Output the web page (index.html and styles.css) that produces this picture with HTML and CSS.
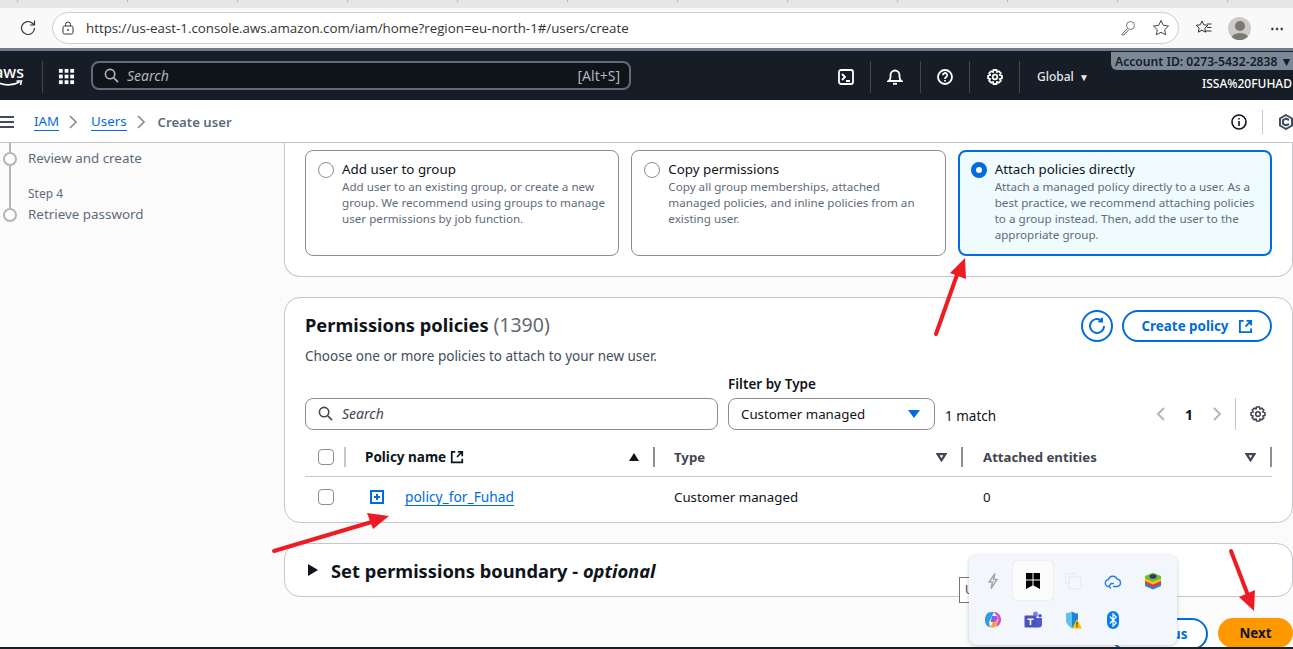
FILE: index.html
```html
<!doctype html>
<html lang="en">
<head>
    <meta charset="UTF-8">
    <meta name="viewport" content="width=device-width, initial-scale=1.0">
    <title>Create user | IAM</title>
    <link rel="stylesheet" href="styles.css">
</head>
<body>
    <div class="tabstrip"></div>

    <div class="browser-bar">
        <svg class="refresh-icon" viewBox="0 0 18 18"><path d="M15.5 9a6.5 6.5 0 1 1-2-4.7L15.5 6M15.5 1.5V6H11"/></svg>
        <div class="address">
            <svg class="lock-icon" viewBox="0 0 14 14"><rect x="2" y="5" width="10" height="8" rx="1.5"/><path d="M4.5 5V3.5a2.5 2.5 0 0 1 5 0V5"/><circle cx="7" cy="9" r=".6"/></svg>
            <span class="url">https://us-east-1.console.aws.amazon.com/iam/home?region=eu-north-1#/users/create</span>
            <svg class="key-icon" viewBox="0 0 16 16"><circle cx="10.5" cy="5.5" r="4"/><path d="M7.5 8.5 2 14v1h2l1-1v-1h1l2.5-3"/></svg>
            <svg class="star-icon" viewBox="0 0 18 18"><path d="m9 1.5 2.3 4.8 5.2.7-3.8 3.6.9 5.2L9 13.3l-4.6 2.5.9-5.2L1.5 7l5.2-.7z"/></svg>
        </div>
        <svg class="fav-icon" viewBox="0 0 18 18"><path d="m7 2 1.8 3.800 4 .5-3 2.800.8 4.100L7 11.200l-3.600 2 .7-4.100-3-2.800 4.100-.5z"/><path d="M12 5h4.500M12 8.500h4.500M11 12h5.500"/></svg>
        <div class="avatar"><span class="avatar-head"></span><span class="avatar-body"></span></div>
        <span class="more">&#8943;</span>
    </div>

    <nav class="topnav">
        <div class="logo">
            <span class="logo-text">aws</span>
            <svg class="logo-smile" viewBox="0 0 30 8"><path d="M1 1c7 5 17 5 24 1M22 1h5l-1 4"/></svg>
        </div>
        <svg class="apps-icon" viewBox="0 0 18 18"><rect x="1" y="1" width="4" height="4"/><rect x="7" y="1" width="4" height="4"/><rect x="13" y="1" width="4" height="4"/><rect x="1" y="7" width="4" height="4"/><rect x="7" y="7" width="4" height="4"/><rect x="13" y="7" width="4" height="4"/><rect x="1" y="13" width="4" height="4"/><rect x="7" y="13" width="4" height="4"/><rect x="13" y="13" width="4" height="4"/></svg>
        <div class="nav-search">
            <svg class="search-icon" viewBox="0 0 16 16"><circle cx="6.5" cy="6.5" r="5"/><path d="m10.5 10.5 4.500 4.500"/></svg>
            <span class="nav-search-text">Search</span>
            <span class="nav-shortcut">[Alt+S]</span>
        </div>
        <div class="nav-tools">
            <div class="nav-cell"><svg class="nav-icon" viewBox="0 0 16 16"><rect x="1" y="1" width="14" height="14" rx="2"/><path d="m4 5 3 3-3 3M8 12h4"/></svg></div>
            <div class="nav-cell"><svg class="nav-icon" viewBox="0 0 16 16"><path d="M1.5 12c1.500-1 2-2 2-4V6a4.500 4.500 0 0 1 9 0v2c0 2 .5 3 2 4z"/><path d="M6 14.800h4"/></svg></div>
            <div class="nav-cell"><svg class="nav-icon" viewBox="0 0 16 16"><circle cx="8" cy="8" r="7"/><path d="M5.800 6.200a2.200 2.200 0 1 1 3.300 1.900C8.300 8.600 8 9 8 10M8 11v1.500"/></svg></div>
            <div class="nav-cell"><svg class="nav-icon" viewBox="0 0 16 16"><path d="m6.500 1h3l.5 2 1.800-.8 2 2-.9 1.800 2 .6v2.800l-2 .6.900 1.800-2 2-1.800-.8-.5 2h-3l-.5-2-1.800.8-2-2 .9-1.800-2-.6V6.600l2-.6-.9-1.800 2-2L6 3z"/><circle cx="8" cy="8" r="2.300"/></svg></div>
            <div class="nav-global">Global <span class="caret">&#9660;</span></div>
            <div class="nav-account">
                <div class="account-tab">Account ID: 0273-5432-2838 &#9660;</div>
                <div class="account-name">ISSA%20FUHAD</div>
            </div>
        </div>
    </nav>

    <div class="crumbs">
        <svg class="menu-icon" viewBox="0 0 16 12"><path d="M0 1h14M0 6h14M0 11h14"/></svg>
        <a class="crumb-link">IAM</a>
        <svg class="crumb-sep" viewBox="0 0 8 14"><path d="m1 1 6 6-6 6"/></svg>
        <a class="crumb-link">Users</a>
        <svg class="crumb-sep crumb-sep-last" viewBox="0 0 8 14"><path d="m1 1 6 6-6 6"/></svg>
        <span class="crumb-current">Create user</span>
        <div class="crumb-tools">
            <svg class="info-icon" viewBox="0 0 16 16"><circle cx="8" cy="8" r="7"/><path d="M8 7v5M8 4v1.500"/></svg>
            <span class="crumb-divider"></span>
            <svg class="hex-icon" viewBox="0 0 16 16"><path d="M8 1 14 4.500v7L8 15 2 11.500v-7z"/><path d="M11 6 8 4.500 5 6v4l3 1.500L11 10"/></svg>
        </div>
    </div>

    <div class="main">
        <aside class="steps">
            <div class="rail rail-short"></div>
            <div class="step"><span class="step-dot"></span><span class="step-label">Review and create</span></div>
            <div class="rail rail-long"><span class="step-cap">Step 4</span></div>
            <div class="step"><span class="step-dot"></span><span class="step-label">Retrieve password</span></div>
        </aside>

        <div class="content">
            <section class="panel panel-options">
                <div class="options">
                    <div class="option">
                        <span class="radio"></span>
                        <div>
                            <div class="option-title">Add user to group</div>
                            <div class="option-desc">Add user to an existing group, or create a new group. We recommend using groups to manage user permissions by job function.</div>
                        </div>
                    </div>
                    <div class="option">
                        <span class="radio"></span>
                        <div>
                            <div class="option-title">Copy permissions</div>
                            <div class="option-desc">Copy all group memberships, attached managed policies, and inline policies from an existing user.</div>
                        </div>
                    </div>
                    <div class="option option-selected">
                        <span class="radio radio-on"></span>
                        <div>
                            <div class="option-title">Attach policies directly</div>
                            <div class="option-desc">Attach a managed policy directly to a user. As a best practice, we recommend attaching policies to a group instead. Then, add the user to the appropriate group.</div>
                        </div>
                    </div>
                </div>
            </section>

            <section class="panel panel-policies">
                <div class="policies-head">
                    <div>
                        <h2 class="panel-title">Permissions policies <span class="count">(1390)</span></h2>
                        <p class="panel-sub">Choose one or more policies to attach to your new user.</p>
                    </div>
                    <div class="head-actions">
                        <button class="btn-round"><svg viewBox="0 0 18 18"><path d="M16 9a7 7 0 1 1-2.500-5.400M14 .8v3.700h-3.700"/></svg></button>
                        <button class="btn-outline">Create policy <svg class="ext-icon" viewBox="0 0 16 16"><path d="M6 2H2v12h12v-4M9 2h5v5M14 2 8 8"/></svg></button>
                    </div>
                </div>

                <div class="filters">
                    <div class="filter-search">
                        <svg class="search-icon" viewBox="0 0 16 16"><circle cx="6.5" cy="6.5" r="5"/><path d="m10.5 10.5 4.500 4.500"/></svg>
                        <span>Search</span>
                    </div>
                    <div class="filter-type">
                        <label class="filter-label">Filter by Type</label>
                        <div class="select">Customer managed <span class="select-caret"></span></div>
                    </div>
                    <span class="matches">1 match</span>
                    <div class="pager">
                        <svg class="pager-arrow" viewBox="0 0 10 16"><path d="M8 2 2 8l6 6"/></svg>
                        <span class="pager-num">1</span>
                        <svg class="pager-arrow" viewBox="0 0 10 16"><path d="m2 2 6 6-6 6"/></svg>
                        <span class="pager-sep"></span>
                        <svg class="pager-gear" viewBox="0 0 16 16"><path d="m6.500 1h3l.5 2 1.800-.8 2 2-.9 1.800 2 .6v2.800l-2 .6.900 1.800-2 2-1.800-.8-.5 2h-3l-.5-2-1.800.8-2-2 .9-1.800-2-.6V6.600l2-.6-.9-1.800 2-2L6 3z"/><circle cx="8" cy="8" r="2.300"/></svg>
                    </div>
                </div>

                <table class="policy-table">
                    <thead>
                        <tr>
                            <th class="col-check"><span class="checkbox"></span></th>
                            <th class="col-name"><span class="th-inner">Policy name <svg class="th-ext" viewBox="0 0 16 16"><path d="M6 2H2v12h12v-4M9 2h5v5M14 2 8 8"/></svg><span class="sort-up"></span></span></th>
                            <th class="col-type"><span class="th-inner th-muted">Type<svg class="sort-down" viewBox="0 0 10 8"><path d="M1.500 1h7L5 6.500z"/></svg></span></th>
                            <th class="col-attached"><span class="th-inner th-muted">Attached entities<svg class="sort-down" viewBox="0 0 10 8"><path d="M1.500 1h7L5 6.500z"/></svg></span></th>
                        </tr>
                    </thead>
                    <tbody>
                        <tr>
                            <td><span class="checkbox"></span></td>
                            <td class="td-name"><svg class="expand-icon" viewBox="0 0 14 14"><rect x="1" y="1" width="12" height="12"/><path d="M7 4v6M4 7h6"/></svg><a class="policy-link">policy_for_Fuhad</a></td>
                            <td class="td-type">Customer managed</td>
                            <td class="td-attached">0</td>
                        </tr>
                    </tbody>
                </table>
            </section>

            <section class="panel panel-boundary">
                <span class="tri-right"></span>
                <h2 class="panel-title">Set permissions boundary - <em>optional</em></h2>
            </section>

            <div class="wizard-actions">
                <button class="btn-prev">Previous</button>
                <button class="btn-next">Next</button>
            </div>
        </div>
    </div>

    <div class="tray-tip">U</div>
    <div class="tray">
        <div class="tray-cell"><svg viewBox="0 0 18 18"><path class="tray-bolt" d="M11 1.500 5 10h3.500L7 16.500l6-9H9.500z"/></svg></div>
        <div class="tray-cell tray-cell-active"><svg viewBox="0 0 18 18"><rect x="2" y="1" width="6.500" height="6.500"/><rect x="9.500" y="1" width="6.500" height="6.500"/><path d="M2 8.500h6.500v5L2 17zM9.500 8.500H16V17l-6.500-3.500z"/></svg></div>
        <div class="tray-cell"><svg viewBox="0 0 18 18"><path class="tray-ghost" d="M1.500 1.500h10v3M1.500 1.500v10h3M5 5h12v12H5z"/></svg></div>
        <div class="tray-cell"><svg viewBox="0 0 18 18"><path class="tray-cloud" d="M5 14.500a3.500 3.500 0 0 1-.5-7 4.500 4.500 0 0 1 8.500-.5 3.800 3.800 0 0 1 .5 7.500H9"/><path class="tray-cloud" d="M10 11.500H7l-2 3 2 2"/></svg></div>
        <div class="tray-cell"><svg viewBox="0 0 18 18"><path fill="#2f7de1" d="M1 11 9 8l8 3v3l-8 3.500L1 14z"/><path fill="#e53935" d="M1 8.500 9 6l8 2.500v3L9 15l-8-3.500z"/><path fill="#f6c21c" d="M1 6 9 3.500 17 6v3l-8 3.500L1 9z"/><path fill="#6cbf3a" d="M1 4 9 .8 17 4v2.500L9 10 1 6.500z"/><ellipse cx="9" cy="4.500" rx="3.500" ry="2.200" fill="#3b2f6b"/></svg></div>
        <div class="tray-cell"><svg viewBox="0 0 18 18"><path fill="#2d9be8" d="M1 9c0-4.500 2.500-8 6-8h3L5 11l1 5c-3 0-5-3-5-7z"/><path fill="#f5a13c" d="M5 16c3 1 6 1 7.500-2.500L14 9l-5 1.500L7 15z"/><path fill="#d94fc0" d="M10 1c3.500 0 7 2.500 7 8 0 3.500-2.500 6-5 7l2.500-8-2-3.500z"/><path fill="#8c5de8" d="M8 5h4.500l1.500 3-3.500 3H6.500z"/></svg></div>
        <div class="tray-cell"><svg viewBox="0 0 18 18"><circle cx="11.500" cy="3" r="2.500" fill="#7b83eb"/><circle cx="16" cy="4.800" r="1.800" fill="#5059c9"/><path fill="#5059c9" d="M11 7h7v6a3 3 0 0 1-3 3.500h-4z"/><rect x="0.500" y="4.500" width="12" height="12" rx="1" fill="#4b53bc"/><path fill="#fff" d="M3.500 7.500h6V9H7.300v5H5.700V9H3.500z"/></svg></div>
        <div class="tray-cell"><svg viewBox="0 0 18 18"><path fill="#1f86d6" d="M8 0.500c2 1.500 4 2 6 2v5.500c0 4-2.500 7-6 9-3.500-2-6-5-6-9V2.500c2 0 4-.5 6-2z"/><path fill="#5cc3f0" d="M8 0.500V17c-3.500-2-6-5-6-9V2.500c2 0 4-.5 6-2z"/><path fill="#ffc107" d="m13 8 5 9.500H8z"/><path fill="#222" d="M12.500 11h1v3.500h-1zM12.500 15h1v1.200h-1z"/></svg></div>
        <div class="tray-cell"><svg viewBox="0 0 18 18"><rect x="3" y="0" width="12" height="18" rx="6" fill="#0a7cf2"/><path class="tray-bt" d="m5.800 5.500 6.400 6.500L9 15V3l3.200 3-6.400 6.500"/></svg></div>
    </div>

    <svg class="arrows" viewBox="0 0 1293 649">
        <path class="arrow-line" d="M936 334 958 272"/>
        <path class="arrow-head" d="M965 258 950 273 966 279z"/>
        <path class="arrow-line" d="M274 551 375 521"/>
        <path class="arrow-head" d="M389 516 367 513 373 529z"/>
        <path class="arrow-line" d="M1231 551 1249 598"/>
        <path class="arrow-head" d="M1254 611 1239 597 1255 590z"/>
    </svg>

    <div class="taskbar-edge"></div>
</body>
</html>
```

FILE: styles.css
```css
* {
    box-sizing: border-box;
}

html, body {
    margin: 0;
    height: 649px;
    overflow: hidden;
}

body {
    position: relative;
    background-color: #fbfbfb;
    color: #0f141a;
    font-family: "Noto Sans", "Open Sans", sans-serif;
    font-size: 14px;
}

svg {
    flex: none;
    fill: none;
    stroke: currentColor;
    display: block;
}

/* browser chrome */
.tabstrip {
    height: 8px;
    background-color: #e6e6e6;
    background-image: repeating-linear-gradient(90deg, transparent 0 17px, #b5b5b5 17px 18px, transparent 18px 110px);
    background-size: 100% 2px;
    background-repeat: no-repeat;
}

.browser-bar {
    height: 40px;
    display: flex;
    align-items: center;
    background-color: #f9f9f9;
    padding-left: 19px;
}

.refresh-icon {
    width: 18px;
    height: 18px;
    color: #333;
    stroke-width: 1.2;
}

.address {
    margin-left: 15px;
    width: 1127px;
    height: 32px;
    display: flex;
    align-items: center;
    background-color: #fff;
    border: 1px solid #cfcfcf;
    border-radius: 16px;
    padding: 0 8px;
}

.lock-icon {
    width: 14px;
    height: 14px;
    color: #333;
}

.url {
    margin-left: 11px;
    color: #333;
    font-family: "Open Sans", sans-serif;
    font-size: 13.3px;
}

.key-icon {
    margin-left: auto;
    width: 16px;
    height: 16px;
    color: #777;
}

.star-icon {
    margin-left: 16px;
    width: 18px;
    height: 18px;
    color: #444;
}

.fav-icon {
    margin-left: 16px;
    width: 18px;
    height: 18px;
    color: #333;
}

.avatar {
    margin-left: 15px;
    width: 23px;
    height: 23px;
    border-radius: 50%;
    background-color: #cdcbc7;
    overflow: hidden;
    display: flex;
    flex-direction: column;
    align-items: center;
}

.avatar-head {
    flex: none;
    margin-top: 4px;
    width: 10px;
    height: 10px;
    border-radius: 50%;
    background-color: #7b7773;
}

.avatar-body {
    flex: none;
    margin-top: 2px;
    width: 18px;
    height: 12px;
    border-radius: 50%;
    background-color: #7b7773;
}

.more {
    margin-left: 19px;
    color: #333;
    font-size: 14px;
    font-weight: bold;
}

/* aws top nav */
.topnav {
    height: 52px;
    display: flex;
    align-items: center;
    background-color: #161d26;
    border-top: 3px solid #6f7b8b;
    color: #fff;
}

.logo {
    width: 43px;
    height: 32px;
    margin-top: 2px;
    border-right: 1px solid #424650;
    overflow: hidden;
    position: relative;
}

.logo-text {
    position: absolute;
    right: 18px;
    top: 1px;
    font-size: 16px;
    font-weight: 500;
    line-height: 20px;
}

.logo-smile {
    position: absolute;
    left: -6px;
    top: 19px;
    width: 31px;
    height: 8px;
    stroke-width: 1.6;
}

.apps-icon {
    margin: 2px 0 0 15px;
    width: 17px;
    height: 17px;
    fill: #fff;
    stroke: none;
}

.nav-search {
    margin-left: 16px;
    width: 540px;
    height: 29px;
    display: flex;
    align-items: center;
    background-color: #0f141a;
    border: 2px solid #5f6b7a;
    border-radius: 8px;
    padding: 0 9px 0 11px;
    color: #b4b4bb;
    font-size: 14px;
}

.search-icon {
    width: 15px;
    height: 15px;
    stroke-width: 1.7;
}

.nav-search-text {
    margin-left: 8px;
    font-style: italic;
}

.nav-shortcut {
    margin-left: auto;
}

.nav-tools {
    margin-left: auto;
    height: 100%;
    display: flex;
    align-items: center;
}

.nav-cell {
    width: 49.7px;
    height: 32px;
    margin-top: 2px;
    display: flex;
    align-items: center;
    justify-content: center;
    border-right: 1px solid #424650;
}

.nav-icon {
    width: 16px;
    height: 16px;
    stroke-width: 1.8;
}

.nav-global {
    width: 91px;
    margin-top: 1px;
    padding-left: 17px;
    font-size: 12px;
    font-weight: 500;
    color: #e8e8ea;
}

.caret {
    margin-left: 2px;
    font-size: 10px;
}

.nav-account {
    width: 182px;
    height: 100%;
    display: flex;
    flex-direction: column;
    white-space: nowrap;
    overflow: hidden;
}

.account-tab {
    margin-top: 1px;
    height: 18px;
    padding-left: 4px;
    background-color: #7c8797;
    border-radius: 0 0 0 6px;
    color: #161d26;
    font-size: 12.15px;
    font-weight: 600;
    line-height: 20px;
}

.account-name {
    margin-top: 6px;
    text-align: right;
    padding-right: 1px;
    font-size: 12px;
    font-weight: 500;
    line-height: 16px;
}

/* breadcrumbs */
.crumbs {
    height: 43px;
    display: flex;
    align-items: center;
    padding-top: 2px;
    background-color: #fff;
    border-bottom: 1px solid #c6c6cd;
}

.menu-icon {
    width: 16px;
    height: 12px;
    stroke-width: 2;
    color: #414d5c;
}

.crumb-link {
    color: #006ce0;
    border-bottom: 1px solid #006ce0;
    font-size: 13.3px;
    line-height: 17px;
}

.crumb-link:first-of-type {
    margin-left: 18px;
}

.crumb-sep {
    margin: 0 14px 0 10px;
    width: 8px;
    height: 14px;
    color: #8c8c94;
    stroke-width: 1.7;
}

.crumb-sep-last {
    margin-right: 13px;
}

.crumb-current {
    color: #5f6b7a;
    font-weight: 600;
    font-size: 13.2px;
}

.crumb-tools {
    margin-left: auto;
    margin-right: -1px;
    display: flex;
    align-items: center;
}

.info-icon {
    width: 16px;
    height: 16px;
    stroke-width: 1.6;
    color: #0f141a;
}

.crumb-divider {
    margin: 0 15px;
    width: 1px;
    height: 24px;
    background-color: #c6c6cd;
}

.hex-icon {
    width: 16px;
    height: 16px;
    stroke-width: 2;
    color: #414d5c;
}

/* main area */
.main {
    display: flex;
}

.steps {
    width: 284px;
    flex: none;
    color: #5f6b7a;
}

.rail {
    width: 2px;
    margin-left: 9px;
    background-color: #b4b4bb;
}

.rail-short {
    height: 9px;
}

.rail-long {
    height: 42px;
    position: relative;
}

.step-cap {
    position: absolute;
    left: 19px;
    top: 20px;
    font-size: 12px;
    line-height: 16px;
    white-space: nowrap;
}

.step {
    height: 14px;
    display: flex;
    align-items: center;
    padding-left: 3px;
}

.step-dot {
    width: 14px;
    height: 14px;
    border: 2px solid #b4b4bb;
    border-radius: 50%;
    background-color: #fff;
}

.step-label {
    margin-left: 11px;
    margin-top: -2px;
    font-size: 13.4px;
    white-space: nowrap;
}

.content {
    flex: 1;
    min-width: 0;
}

.panel {
    background-color: #fff;
    border: 1px solid #c6c6cd;
    border-radius: 16px;
}

.panel-options {
    height: 134px;
    border-top: none;
    border-radius: 0 0 16px 16px;
    padding: 7px 20px 0;
}

.options {
    display: grid;
    grid-template-columns: repeat(3, 1fr);
    gap: 12px;
}

.option {
    height: 106px;
    display: flex;
    gap: 8px;
    padding: 9px 12px;
    border: 1px solid #8c8c94;
    border-radius: 8px;
}

.option-selected {
    background-color: #f0fbff;
    border: 2px solid #006ce0;
    padding: 8px 11px;
}

.radio {
    flex: none;
    width: 16px;
    height: 16px;
    margin-top: 2px;
    border: 1px solid #8c8c94;
    border-radius: 50%;
    background-color: #fff;
}

.radio-on {
    border: 5px solid #006ce0;
}

.option-title {
    font-size: 13.35px;
    line-height: 18px;
}

.option-desc {
    margin-top: 1px;
    color: #5f6b7a;
    font-size: 11.65px;
    line-height: 16px;
}

.panel-policies {
    height: 226px;
    margin-top: 20px;
    padding: 0 20px;
}

.policies-head {
    display: flex;
    justify-content: space-between;
    padding-top: 12px;
}

.panel-title {
    margin: 0;
    font-size: 18.3px;
    font-weight: 700;
    line-height: 30px;
}

.count {
    color: #656871;
    font-size: 19.5px;
    font-weight: 400;
}

.panel-sub {
    margin: 6px 0 0;
    color: #414d5c;
    font-size: 13.5px;
    line-height: 20px;
}

.head-actions {
    display: flex;
    gap: 9px;
}

button {
    font-family: inherit;
    cursor: pointer;
}

.btn-round {
    width: 32px;
    height: 32px;
    padding: 5px;
    background-color: #fff;
    border: 2px solid #006ce0;
    border-radius: 50%;
    color: #006ce0;
}

.btn-round svg {
    width: 18px;
    height: 18px;
    stroke-width: 2;
}

.btn-outline {
    width: 150px;
    height: 32px;
    display: flex;
    align-items: center;
    justify-content: center;
    gap: 9px;
    background-color: #fff;
    border: 2px solid #006ce0;
    border-radius: 16px;
    color: #006ce0;
    font-size: 13.4px;
    font-weight: 700;
}

.ext-icon {
    width: 15px;
    height: 15px;
    stroke-width: 2;
}

.filters {
    margin-top: 9px;
    display: flex;
    align-items: flex-end;
}

.filter-search {
    width: 413px;
    height: 32px;
    display: flex;
    align-items: center;
    gap: 9px;
    padding: 0 12px 2px;
    border: 1px solid #8c8c94;
    border-radius: 8px;
    color: #424650;
    font-size: 14px;
    font-style: italic;
}

.filter-type {
    margin-left: 10px;
    width: 207px;
}

.filter-label {
    display: block;
    font-size: 13.5px;
    font-weight: 600;
    line-height: 18px;
    margin-bottom: 5px;
}

.select {
    height: 32px;
    display: flex;
    align-items: center;
    justify-content: space-between;
    padding: 0 14px 0 12px;
    border: 1px solid #8c8c94;
    border-radius: 8px;
    font-size: 13.3px;
}

.select-caret {
    width: 0;
    height: 0;
    border-left: 6px solid transparent;
    border-right: 6px solid transparent;
    border-top: 8px solid #006ce0;
}

.matches {
    margin: 0 0 4px 10px;
    font-size: 13.5px;
    line-height: 20px;
}

.pager {
    margin-left: auto;
    height: 32px;
    display: flex;
    align-items: center;
    color: #b4b4bb;
}

.pager-arrow {
    width: 10px;
    height: 16px;
    stroke-width: 2;
}

.pager-num {
    margin: 0 19px;
    width: 8px;
    text-align: center;
    color: #0f141a;
    font-size: 14px;
    font-weight: 700;
}

.pager-sep {
    margin: 0 14px 0 13px;
    width: 1px;
    height: 32px;
    background-color: #c6c6cd;
}

.pager-gear {
    width: 16px;
    height: 16px;
    stroke-width: 1.6;
    color: #424650;
    margin-right: 6px;
}

.policy-table {
    width: 100%;
    margin-top: 9px;
    border-collapse: collapse;
    table-layout: fixed;
    font-size: 13.3px;
}

.policy-table th {
    height: 37px;
    padding: 0;
    text-align: left;
    border-bottom: 1px solid #c6c6cd;
}

.policy-table td {
    height: 41px;
    padding: 0;
}

.col-check {
    width: 39px;
}

.col-name {
    width: 309px;
}

.col-type {
    width: 308px;
}

.checkbox {
    display: block;
    width: 16px;
    height: 16px;
    margin-left: 13px;
    background-color: #fff;
    border: 1px solid #8c8c94;
    border-radius: 4px;
}

.th-inner {
    position: relative;
    display: flex;
    align-items: center;
    height: 20px;
    padding-left: 19px;
    font-size: 13.5px;
    font-weight: 700;
    border-left: 2px solid #c6c6cd;
}

.th-muted {
    color: #424650;
    font-size: 13.2px;
    border-left-color: #8c8c94;
}

.col-attached .th-inner {
    padding-left: 20px;
    border-right: 2px solid #8c8c94;
}

.th-ext {
    margin-left: 4px;
    width: 14px;
    height: 14px;
    stroke-width: 2;
}

.sort-up {
    position: absolute;
    right: 14px;
    width: 0;
    height: 0;
    border-left: 5px solid transparent;
    border-right: 5px solid transparent;
    border-bottom: 8px solid #0f141a;
}

.sort-down {
    position: absolute;
    right: 14px;
    width: 11px;
    height: 9px;
    stroke-width: 2;
    color: #424650;
}

.policy-table .td-name {
    display: flex;
    align-items: center;
    height: 41px;
    padding-left: 26px;
}

.expand-icon {
    width: 14px;
    height: 14px;
    stroke-width: 2;
    color: #006ce0;
}

.policy-link {
    margin-left: 21px;
    color: #006ce0;
    border-bottom: 1px solid #006ce0;
    font-size: 13.8px;
    line-height: 17px;
}

.policy-table .td-type {
    padding-left: 21px;
}

.policy-table .td-attached {
    padding-left: 22px;
}

.panel-boundary {
    height: 54px;
    margin-top: 20px;
    display: flex;
    align-items: center;
    padding-left: 23px;
    gap: 13px;
}

.panel-boundary .panel-title {
    margin-top: 1px;
}

.tri-right {
    width: 0;
    height: 0;
    border-top: 6px solid transparent;
    border-bottom: 6px solid transparent;
    border-left: 10px solid #0f141a;
}

.wizard-actions {
    margin-top: 21px;
    display: flex;
    justify-content: flex-end;
    gap: 10px;
}

.btn-prev {
    width: 98px;
    height: 32px;
    background-color: #fff;
    border: 2px solid #006ce0;
    border-radius: 16px;
    color: #006ce0;
    font-size: 13.3px;
    font-weight: 700;
}

.btn-next {
    width: 75px;
    height: 30px;
    background-color: #ff9900;
    border: none;
    border-radius: 15px;
    color: #0f141a;
    font-size: 13.3px;
    font-weight: 700;
}

/* windows tray flyout, sits over the page */
.tray {
    position: absolute;
    left: 969px;
    top: 555px;
    width: 208px;
    height: 90px;
    display: grid;
    grid-template-columns: repeat(5, 40px);
    grid-template-rows: 39px 39px;
    justify-content: center;
    align-content: center;
    background-color: #f3f6fa;
    border-radius: 8px;
    box-shadow: 0 1px 4px rgba(0, 0, 0, .2);
}

.tray-cell {
    display: flex;
    align-items: center;
    justify-content: center;
    border-radius: 4px;
}

.tray-cell svg {
    width: 18px;
    height: 18px;
    stroke: none;
}

.tray-cell-active {
    background-color: #fbfbfc;
    box-shadow: 0 0 1px rgba(0, 0, 0, .25);
}

.tray-cell-active svg {
    fill: #000;
}

.tray-bolt {
    fill: none;
    stroke: #a5a5a5;
    stroke-width: 1.4;
}

.tray-ghost {
    fill: none;
    stroke: #e6e9ee;
    stroke-width: 1;
}

.tray-cloud {
    fill: none;
    stroke: #2b7de9;
    stroke-width: 1.4;
}

.tray-bt {
    fill: none;
    stroke: #fff;
    stroke-width: 1.2;
}

.tray-tip {
    position: absolute;
    left: 959px;
    top: 577px;
    width: 12px;
    height: 26px;
    padding-left: 5px;
    background-color: #fff;
    border: 1px solid #767676;
    font-size: 12px;
    line-height: 24px;
    color: #444;
}

.arrows {
    position: absolute;
    left: 0;
    top: 0;
    width: 1293px;
    height: 649px;
    pointer-events: none;
}

.arrow-line {
    stroke: #ed1c24;
    stroke-width: 4;
    stroke-linecap: round;
}

.arrow-head {
    fill: #ed1c24;
    stroke: none;
}

.taskbar-edge {
    position: absolute;
    left: 0;
    right: 0;
    bottom: 0;
    height: 2px;
    background-color: #1c2024;
}
```
